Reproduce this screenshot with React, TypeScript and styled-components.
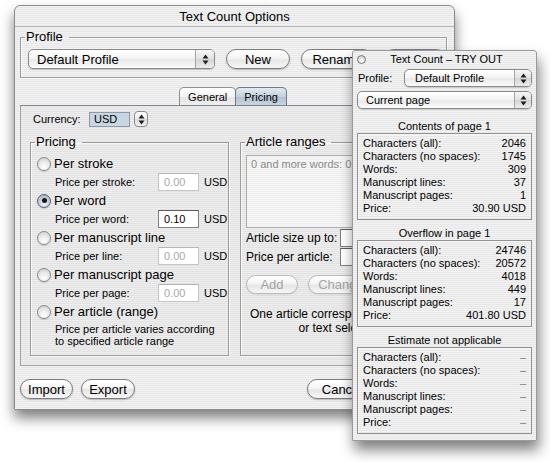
import styled, { createGlobalStyle } from "styled-components"

const GlobalStyle = createGlobalStyle`
  html, body { margin: 0; padding: 0; background: #ffffff; }
  body {
    font-family: "Liberation Sans", Arial, Helvetica, sans-serif;
    color: #000;
  }
  *, *::before, *::after { box-sizing: border-box; }
`

const stripes = `repeating-linear-gradient(to bottom, #f3f3f3 0px, #f3f3f3 1px, #e7e7e7 1px, #e7e7e7 2px)`

const pricing = [
    { label: "Per stroke", field: "Price per stroke:", value: "0.00" },
    { label: "Per word", field: "Price per word:", value: "0.10", checked: true },
    { label: "Per manuscript line", field: "Price per line:", value: "0.00" },
    { label: "Per manuscript page", field: "Price per page:", value: "0.00" },
]

const rowNames = ["Characters (all):", "Characters (no spaces):", "Words:", "Manuscript lines:", "Manuscript pages:", "Price:"]

const sections = [
    { title: "Contents of page 1", values: ["2046", "1745", "309", "37", "1", "30.90 USD"] },
    { title: "Overflow in page 1", values: ["24746", "20572", "4018", "449", "17", "401.80 USD"] },
    { title: "Estimate not applicable", values: ["–", "–", "–", "–", "–", "–"], empty: true },
]

function Arrows() {
    return (
        <svg width="7" height="11" viewBox="0 0 7 11">
            <path d="M0.5 4.5 L3.5 0.5 L6.5 4.5 Z M0.5 6.5 L3.5 10.5 L6.5 6.5 Z" fill="#1e1e1e" />
        </svg>
    )
}

export default function App() {
    return (
        <Desktop>
            <GlobalStyle />
            <Window $left={14} $top={5} $width={441} $height={405}>
                <TitleBar>Text Count Options</TitleBar>
                <MainBody>
                    <Group>
                        <Legend>Profile</Legend>
                        <ProfileRow>
                            <Popup $w={187} $h={20} $size={13}>
                                <PopupText>Default Profile</PopupText>
                                <PopupEnd $w={19}><Arrows /></PopupEnd>
                            </Popup>
                            <PushButton $w={64}>New</PushButton>
                            <PushButton $w={72}>Rename</PushButton>
                            <PushButton $w={62}>Delete</PushButton>
                        </ProfileRow>
                    </Group>

                    <TabBar>
                        <Tab>General</Tab>
                        <Tab $active>Pricing</Tab>
                    </TabBar>
                    <Pane>
                        <CurrencyRow>
                            <SmallLabel $w={56}>Currency:</SmallLabel>
                            <ComboField>USD</ComboField>
                            <Stepper><Arrows /></Stepper>
                        </CurrencyRow>
                        <GroupsRow>
                            <Group $w={199}>
                                <Legend>Pricing</Legend>
                                <PricingBody>
                                    {pricing.map((p) => (
                                        <div key={p.label}>
                                            <RadioRow>
                                                <Radio $on={p.checked} />
                                                <RadioText>{p.label}</RadioText>
                                            </RadioRow>
                                            <PriceRow>
                                                <PriceLabel>{p.field}</PriceLabel>
                                                <Field $w={41} $disabled={!p.checked} readOnly value={p.value} />
                                                <Unit>USD</Unit>
                                            </PriceRow>
                                        </div>
                                    ))}
                                    <RadioRow>
                                        <Radio />
                                        <RadioText>Per article (range)</RadioText>
                                    </RadioRow>
                                    <Note>Price per article varies according<br />to specified article range</Note>
                                </PricingBody>
                            </Group>
                            <Group $w={197} $clip>
                                <Legend>Article ranges</Legend>
                                <ArticleBody>
                                    <RangeList>
                                        <RangeItem>0 and more words: 0.00 USD</RangeItem>
                                    </RangeList>
                                    <FormRow>
                                        <FormLabel>Article size up to:</FormLabel>
                                        <Field $w={60} readOnly value="" />
                                    </FormRow>
                                    <FormRow>
                                        <FormLabel>Price per article:</FormLabel>
                                        <Field $w={60} readOnly value="" />
                                    </FormRow>
                                    <ButtonRow>
                                        <PushButton $w={52} $h={19} $disabled>Add</PushButton>
                                        <PushButton $w={66} $h={19} $disabled>Change</PushButton>
                                    </ButtonRow>
                                    <CenterNote>One article corresponds to one page<br />or text selection</CenterNote>
                                </ArticleBody>
                            </Group>
                        </GroupsRow>
                    </Pane>

                    <BottomRow>
                        <PushButton $w={53}>Import</PushButton>
                        <PushButton $w={54}>Export</PushButton>
                        <Spacer />
                        <PushButton $w={70}>Cancel</PushButton>
                        <PushButton $w={60}>OK</PushButton>
                    </BottomRow>
                </MainBody>
            </Window>

            <Window $left={352} $top={50} $width={185} $height={391} $utility>
                <PanelTitle>
                    <CloseDot />
                    <span>Text Count – TRY OUT</span>
                </PanelTitle>
                <PanelBody>
                    <PanelRow>
                        <PanelLabel>Profile:</PanelLabel>
                        <Popup $h={18} $size={11} $grow>
                            <PopupText $pad={10}>Default Profile</PopupText>
                            <PopupEnd $w={17}><Arrows /></PopupEnd>
                        </Popup>
                    </PanelRow>
                    <Popup $h={18} $size={11}>
                        <PopupText $pad={8}>Current page</PopupText>
                        <PopupEnd $w={17}><Arrows /></PopupEnd>
                    </Popup>
                    {sections.map((s, i) => (
                        <div key={s.title}>
                            <Heading $first={i === 0}>{s.title}</Heading>
                            <CountBox>
                                {rowNames.map((name, k) => (
                                    <CountRow key={name}>
                                        <span>{name}</span>
                                        <CountValue $empty={s.empty}>{s.values[k]}</CountValue>
                                    </CountRow>
                                ))}
                            </CountBox>
                        </div>
                    ))}
                </PanelBody>
            </Window>
        </Desktop>
    )
}

const Desktop = styled.div`
    position: relative;
    width: 550px;
    height: 462px;
    overflow: hidden;
    background: #ffffff;
`

const Window = styled.div<{ $left: number; $top: number; $width: number; $height: number; $utility?: boolean }>`
    position: absolute;
    left: ${p => p.$left}px;
    top: ${p => p.$top}px;
    width: ${p => p.$width}px;
    height: ${p => p.$height}px;
    display: flex;
    flex-direction: column;
    border: 1px solid ${p => p.$utility ? '#9a9a9a' : '#8a8a8a'};
    border-radius: ${p => p.$utility ? '3px 3px 0 0' : '6px 6px 1px 1px'};
    background: ${stripes};
    box-shadow: ${p => p.$utility ? '2px 9px 14px rgba(0, 0, 0, 0.5)' : '0 8px 13px rgba(0, 0, 0, 0.5)'};
    overflow: hidden;
`

const TitleBar = styled.div`
    flex: none;
    height: 21px;
    display: flex;
    align-items: center;
    justify-content: center;
    font-size: 13px;
    border-bottom: 1px solid #b9b9b9;
`

const PanelTitle = styled.div`
    flex: none;
    height: 16px;
    display: grid;
    grid-template-columns: 14px 1fr 14px;
    align-items: center;
    padding-left: 4px;
    font-size: 11px;

    & span {
        text-align: center;
        white-space: nowrap;
    }
`

const CloseDot = styled.i`
    display: block;
    width: 9px;
    height: 9px;
    border-radius: 50%;
    border: 1px solid #787878;
    background: radial-gradient(circle at 50% 70%, #ffffff 0%, #dcdcdc 60%, #b8b8b8 100%);
`

const MainBody = styled.div`
    flex: 1;
    display: flex;
    flex-direction: column;
    padding: 3px 7px 0 5px;
`

const Group = styled.fieldset<{ $w?: number; $clip?: boolean }>`
    margin: 0;
    padding: 0;
    min-width: 0;
    ${p => p.$w ? `width: ${p.$w}px; flex: none;` : ''}
    ${p => p.$clip ? 'overflow: hidden;' : ''}
    border: 1px solid #9c9c9c;
    box-shadow: inset 1px 1px 0 rgba(255, 255, 255, 0.7), 1px 1px 0 rgba(255, 255, 255, 0.7);
`

const Legend = styled.legend`
    margin-left: 4px;
    padding: 0 6px 0 1px;
    font-size: 13px;
    line-height: 14px;
`

const ProfileRow = styled.div`
    display: flex;
    align-items: center;
    gap: 11px;
    padding: 5px 7px 8px 7px;
    box-sizing: content-box;
    height: 20px;
`

const Popup = styled.div<{ $w?: number; $h: number; $size: number; $grow?: boolean }>`
    flex: ${p => p.$grow ? '1' : 'none'};
    ${p => p.$w ? `width: ${p.$w}px;` : ''}
    height: ${p => p.$h}px;
    display: flex;
    border: 1px solid #8a8a8a;
    border-radius: 5px;
    background: linear-gradient(to bottom, #ffffff 0%, #f4f4f4 45%, #e9e9e9 55%, #fbfbfb 100%);
    box-shadow: 0 1px 1px rgba(0, 0, 0, 0.18);
    font-size: ${p => p.$size}px;
    overflow: hidden;
`

const PopupText = styled.span<{ $pad?: number }>`
    flex: 1;
    display: flex;
    align-items: center;
    padding-left: ${p => p.$pad ?? 8}px;
    white-space: nowrap;
`

const PopupEnd = styled.span<{ $w: number }>`
    flex: none;
    width: ${p => p.$w}px;
    display: flex;
    align-items: center;
    justify-content: center;
    border-left: 1px solid #a6a6a6;
    background: linear-gradient(to bottom, #f6f6f6 0%, #e2e2e2 50%, #d4d4d4 51%, #ececec 100%);
`

const PushButton = styled.div<{ $w: number; $h?: number; $disabled?: boolean }>`
    flex: none;
    width: ${p => p.$w}px;
    height: ${p => p.$h ?? 20}px;
    display: flex;
    align-items: center;
    justify-content: center;
    font-size: 13px;
    color: ${p => p.$disabled ? '#a4a4a4' : '#000'};
    border: 1px solid ${p => p.$disabled ? '#bababa' : '#7c7c7c'};
    border-radius: 10px;
    background: linear-gradient(to bottom, #ffffff 0%, #f5f5f5 45%, #e6e6e6 55%, #f7f7f7 100%);
    box-shadow: 0 1px 2px rgba(0, 0, 0, ${p => p.$disabled ? 0.08 : 0.22});
`

const TabBar = styled.div`
    display: flex;
    justify-content: center;
    margin-top: 9px;
    height: 18px;
`

const Tab = styled.div<{ $active?: boolean }>`
    height: 18px;
    padding: 0 8px;
    margin-left: -1px;
    display: flex;
    align-items: center;
    font-size: 11px;
    border: 1px solid ${p => p.$active ? '#6e7a8a' : '#8e8e8e'};
    border-bottom: none;
    border-radius: 5px 5px 0 0;
    background: ${p => p.$active
        ? 'linear-gradient(to bottom, #e3e9f0 0%, #c6d1dd 50%, #b2c0cf 51%, #c9d4df 100%)'
        : 'linear-gradient(to bottom, #ffffff 0%, #f3f3f3 50%, #e3e3e3 51%, #efefef 100%)'};
`

const Pane = styled.div`
    display: flex;
    flex-direction: column;
    border: 1px solid #a2a2a2;
    border-top-color: #77818f;
    background: rgba(0, 0, 0, 0.02);
    padding: 5px 9px 9px 9px;
`

const CurrencyRow = styled.div`
    display: flex;
    align-items: center;
    height: 16px;
    padding-left: 3px;
`

const SmallLabel = styled.span<{ $w: number }>`
    width: ${p => p.$w}px;
    font-size: 11px;
`

const ComboField = styled.span`
    width: 41px;
    height: 15px;
    display: flex;
    align-items: center;
    padding-left: 4px;
    font-size: 11px;
    border: 1px solid #8e98a4;
    background: #c8d5e3;
`

const Stepper = styled.span`
    width: 14px;
    height: 16px;
    margin-left: 4px;
    display: flex;
    align-items: center;
    justify-content: center;
    border: 1px solid #8a8a8a;
    border-radius: 4px;
    background: linear-gradient(to bottom, #ffffff 0%, #ececec 50%, #dcdcdc 51%, #f2f2f2 100%);
`

const GroupsRow = styled.div`
    display: flex;
    gap: 11px;
    margin-top: 8px;
`

const PricingBody = styled.div`
    padding: 6px 0 8px 6px;
`

const RadioRow = styled.div`
    height: 17px;
    display: flex;
    align-items: center;
    gap: 3px;
`

const Radio = styled.span<{ $on?: boolean }>`
    flex: none;
    width: 14px;
    height: 14px;
    border-radius: 50%;
    display: flex;
    align-items: center;
    justify-content: center;
    border: 1px solid ${p => p.$on ? '#59626d' : '#8a8a8a'};
    background: ${p => p.$on
        ? 'radial-gradient(circle at 50% 75%, #eef2f6 0%, #bcc7d3 60%, #9aa8b8 100%)'
        : 'radial-gradient(circle at 50% 75%, #ffffff 0%, #e6e6e6 55%, #c6c6c6 100%)'};
    box-shadow: 0 1px 1px rgba(0, 0, 0, 0.15);

    &::after {
        content: "";
        display: ${p => p.$on ? 'block' : 'none'};
        width: 5px;
        height: 5px;
        border-radius: 50%;
        background: #161616;
    }
`

const RadioText = styled.span`
    font-size: 13px;
    white-space: nowrap;
`

const PriceRow = styled.div`
    height: 20px;
    display: flex;
    align-items: center;
    padding-left: 18px;
`

const PriceLabel = styled.span`
    width: 103px;
    font-size: 11px;
`

const Field = styled.input<{ $w: number; $disabled?: boolean }>`
    width: ${p => p.$w}px;
    height: 18px;
    flex: none;
    margin: 0;
    padding: 0 0 0 5px;
    font-family: "Liberation Sans", Arial, sans-serif;
    font-size: 11px;
    color: ${p => p.$disabled ? '#a9a9a9' : '#000'};
    background: #ffffff;
    border: 1px solid ${p => p.$disabled ? '#c6c6c6' : '#7f7f7f'};
    border-top-color: ${p => p.$disabled ? '#b4b4b4' : '#5e5e5e'};
    outline: none;
`

const Unit = styled.span`
    margin-left: 5px;
    font-size: 11px;
`

const Note = styled.div`
    margin-top: 3px;
    padding-left: 18px;
    font-size: 11px;
    line-height: 12px;
`

const ArticleBody = styled.div`
    padding: 6px 5px 8px 5px;
`

const RangeList = styled.div`
    height: 73px;
    border: 1px solid #ababab;
    background: rgba(255, 255, 255, 0.45);
    padding: 1px 4px;
`

const RangeItem = styled.div`
    font-size: 11px;
    line-height: 14px;
    color: #8a8a8a;
    white-space: nowrap;
`

const FormRow = styled.div`
    height: 19px;
    display: flex;
    align-items: center;

    &:first-of-type { margin-top: 9px; }
`

const FormLabel = styled.span`
    width: 94px;
    font-size: 12px;
`

const ButtonRow = styled.div`
    display: flex;
    gap: 10px;
    margin-top: 9px;
`

const CenterNote = styled.div`
    margin-top: 13px;
    padding-left: 4px;
    font-size: 12px;
    line-height: 14px;
    text-align: center;
    white-space: nowrap;
`

const BottomRow = styled.div`
    display: flex;
    gap: 8px;
    margin-top: 13px;

    & > :nth-last-child(1) { margin-left: 2px; }
`

const Spacer = styled.div`
    flex: 1;
`

const PanelBody = styled.div`
    flex: 1;
    display: flex;
    flex-direction: column;
    padding: 2px 4px 6px 4px;

    & > ${Popup} { margin-top: 4px; }
`

const PanelRow = styled.div`
    display: flex;
    align-items: center;
`

const PanelLabel = styled.span`
    width: 47px;
    padding-left: 1px;
    font-size: 11px;
`

const Heading = styled.div<{ $first?: boolean }>`
    margin-top: ${p => p.$first ? 10 : 6}px;
    font-size: 11px;
    line-height: 14px;
    text-align: center;
`

const CountBox = styled.div`
    border: 1px solid #929292;
    box-shadow: inset 1px 1px 0 rgba(255, 255, 255, 0.6);
    padding: 3px 5px 4px 5px;
`

const CountRow = styled.div`
    display: flex;
    justify-content: space-between;
    font-size: 11px;
    line-height: 13px;
    white-space: nowrap;
`

const CountValue = styled.span<{ $empty?: boolean }>`
    color: ${p => p.$empty ? '#7a7a7a' : '#000'};
`
